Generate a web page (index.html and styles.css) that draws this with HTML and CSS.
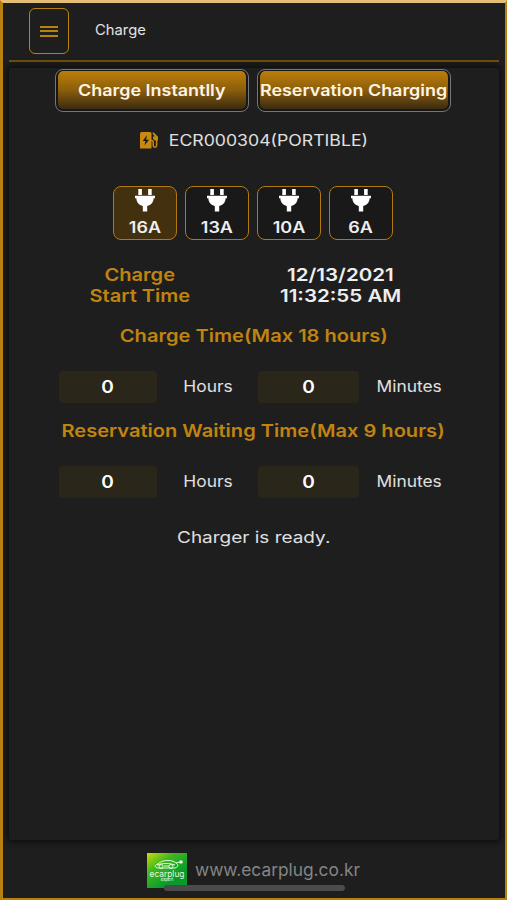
FILE: index.html
```html
<!DOCTYPE html>
<html lang="en">
<head>
<meta charset="utf-8">
<title>Charge</title>
<link rel="stylesheet" href="styles.css">
</head>
<body>
<svg width="0" height="0" class="defs">
  <symbol id="plug" viewBox="0 0 20 23">
    <path d="M3.300 0h3.600v6H3.300zM13.100 0h3.600v6h-3.600zM0 6.800h20v2.500h-1.400c0 4-2.600 6.800-6.400 7.600V22.500H7.800v-5.600C4 16.100 1.400 13.300 1.400 9.300H0z"/>
  </symbol>
</svg>
<div class="app">
  <header class="header">
    <button class="menu" aria-label="Menu"><i></i><i></i><i></i></button>
    <h1 class="title"><span>Charge</span></h1>
  </header>
  <main class="panel">
    <div class="modes">
      <button class="mode"><span class="t">Charge Instantlly</span></button>
      <button class="mode"><span class="t">Reservation Charging</span></button>
    </div>
    <div class="device">
      <svg class="station" viewBox="0 0 18 17">
        <path fill="#c9890f" d="M1.500 0h8.500q1.500 0 1.500 1.500V16.500H0V1.500Q0 0 1.500 0z"/>
        <path fill="#1e1e1e" d="M6.800 3.300 2.700 9h2.700l-.8 4.400L9 7.700H6.200z"/>
        <path fill="none" stroke="#c9890f" stroke-width="1.500" d="M11 8.500h1q1.200 0 1.200 1.400v3.600q0 1.700 1.700 1.700t1.700-1.700V6"/>
        <path fill="#c9890f" d="M12.300 1.200 13.500.2 18 4.800V8.500h-3.200L13 6.800V4.500h1.700z"/>
      </svg>
      <span class="t">ECR000304(PORTIBLE)</span>
    </div>
    <div class="amps">
      <button class="amp active"><svg><use href="#plug"/></svg><span class="t">16A</span></button>
      <button class="amp"><svg><use href="#plug"/></svg><span class="t">13A</span></button>
      <button class="amp"><svg><use href="#plug"/></svg><span class="t">10A</span></button>
      <button class="amp"><svg><use href="#plug"/></svg><span class="t">6A</span></button>
    </div>
    <div class="start">
      <div class="label"><span class="t">Charge</span><span class="t">Start Time</span></div>
      <div class="value"><span class="t">12/13/2021</span><span class="t">11:32:55 AM</span></div>
    </div>
    <h2 class="heading"><span class="t">Charge Time(Max 18 hours)</span></h2>
    <div class="duration">
      <div class="field"><span class="t">0</span></div><span class="unit"><span class="t">Hours</span></span>
      <div class="field"><span class="t">0</span></div><span class="unit"><span class="t">Minutes</span></span>
    </div>
    <h2 class="heading second"><span class="t">Reservation Waiting Time(Max 9 hours)</span></h2>
    <div class="duration">
      <div class="field"><span class="t">0</span></div><span class="unit"><span class="t">Hours</span></span>
      <div class="field"><span class="t">0</span></div><span class="unit"><span class="t">Minutes</span></span>
    </div>
    <p class="status"><span class="t">Charger is ready.</span></p>
  </main>
  <footer class="footer">
    <svg class="logo" viewBox="0 0 40 35">
      <defs><linearGradient id="g" x1="0" y1="0" x2=".65" y2=".75"><stop offset="0" stop-color="#c9dc0c"/><stop offset=".45" stop-color="#43b81e"/><stop offset="1" stop-color="#079b2c"/></linearGradient></defs>
      <path fill="url(#g)" d="M0 0h40v35H0z"/>
      <g fill="none" stroke="#e4f6df" stroke-width="1">
        <path d="M12 15c-5 0-5-3-1-4 3-4 14-5 18-1 3 2 2 4-1 5H12zM10 12c5-2 13-2 18 0"/>
        <circle cx="14" cy="13.500" r="2"/><circle cx="24" cy="13.500" r="2"/><path d="M17 13h5M29 10l4-1"/>
      </g>
      <circle cx="34" cy="9" r="1.800" fill="#e4f6df"/>
      <text class="brand" x="20" y="23.500" text-anchor="middle" textLength="35" lengthAdjust="spacingAndGlyphs">ecarplug</text>
      <text class="sub" x="20" y="28" text-anchor="middle">expert</text>
    </svg>
    <span class="url"><span>www.ecarplug.co.kr</span></span>
    <div class="home"></div>
  </footer>
</div>
</body>
</html>
```

FILE: styles.css
```css
* { box-sizing: border-box; }
body { margin: 0; background: #1e1e1e; font-family: Inter, "Liberation Sans", sans-serif; color: #eee; }
button { font: inherit; color: inherit; padding: 0; margin: 0; background: none; }
.defs { display: block; }
.app {
  width: 507px; height: 900px; display: flex; flex-direction: column; overflow: hidden;
  border: solid #b8800f; border-width: 3px 2px 2px 3px; border-top-color: #e4bd77;
  background: #1e1e1e;
}
.header {
  height: 59px; margin: 0 6px; flex: none; display: flex; align-items: flex-start;
  border-bottom: 2px solid #70500f;
}
.menu {
  width: 40px; height: 46px; margin: 5px 0 0 20px; border: 1px solid #b9810f; border-radius: 6px;
  display: flex; flex-direction: column; align-items: center; justify-content: center; gap: 2.500px;
}
.menu i { width: 18px; height: 2px; background: #b9810f; }
.title { margin: 17px 0 0 26px; font-size: 14.500px; line-height: 20px; font-weight: 400; color: #e2e2e2; }
.title span { display: inline-block; transform: scaleX(1.020); transform-origin: left; }
.panel {
  height: 772px; margin: 6px 6px 0; flex: none; border-radius: 3px;
  box-shadow: 0 0 6px 2px #0d0d0d; display: flex; flex-direction: column; align-items: center;
}
.t { display: block; white-space: nowrap; transform: scaleX(1.120); }
.modes { display: flex; gap: 8px; margin: 1px 0 0 -2px; }
.mode {
  width: 194px; height: 43px; padding: 1px 2px 2px; border: 1px solid #777; border-radius: 8px;
  display: flex; align-items: center; justify-content: center; font-size: 16px; font-weight: 600; color: #fff4e0;
  background: linear-gradient(#bd7e08, #8a5e0c 50%, #3c2b10) content-box, #171717;
}
.device { display: flex; align-items: center; height: 20px; margin: 18px 0 0; width: 228px; gap: 23px; font-size: 15.500px; color: #e0e0e0; }
.device .t { transform: scaleX(1.140); }
.station { width: 18px; height: 17px; }
.amps { display: flex; gap: 8px; margin: 36px 0 0 -2px; }
.amp {
  width: 64px; height: 54px; border: 1px solid #b07a10; border-radius: 8px; background: #191919;
  display: flex; flex-direction: column; align-items: center; font-size: 15.500px; line-height: 20px; font-weight: 600;
}
.amp svg { width: 20px; height: 23px; margin: 2px 0 6px; fill: #fff; flex: none; }
.amp.active { background: #42300f; }
.amp .t { transform: scaleX(1.160); }
.start { display: flex; width: 402px; margin: 24px 0 0 -2px; font-size: 17.500px; line-height: 21px; font-weight: 600; text-align: center; }
.label, .value { width: 201px; display: flex; flex-direction: column; align-items: center; }
.label { color: #c08410; padding-right: 26px; }
.value { padding-right: 26px; }
.start .label .t, .heading .t { transform: scaleX(1.147); }
.start .value .t { transform: scaleX(1.175); }
.heading { margin: 19px 0 0 -1px; font-size: 17.500px; line-height: 21px; font-weight: 600; color: #c08410; }
.second { margin-top: 17px; }
.duration { display: grid; grid-template-columns: 98px 101px 101px 101px; height: 32px; width: 401px; margin: 25px 0 0 11px; align-items: center; }
.field { height: 32px; border-radius: 4px; background: #2a2619; display: flex; align-items: center; justify-content: center; font-size: 17px; font-weight: 600; color: #fff; }
.unit { display: flex; justify-content: center; font-size: 15.500px; color: #e0e0e0; padding-bottom: 2px; }
.status { margin: 29px 0 0; font-size: 16px; line-height: 21px; color: #e0e0e0; }
.status .t { transform: scaleX(1.185); }
.footer { position: relative; flex: 1; display: flex; align-items: flex-start; padding: 13px 0 0 144px; }
.logo { width: 40px; height: 35px; flex: none; }
.brand { font: 8.500px Inter, sans-serif; fill: #e4f6df; }
.sub { font: 600 4px Inter, sans-serif; fill: #d5efcf; }
.url { margin: 5px 0 0 8px; font-size: 17.500px; line-height: 24px; color: #858585; }
.url span { display: inline-block; transform: scaleX(.99); transform-origin: left; }
.home { position: absolute; left: 161px; top: 45px; width: 181px; height: 6px; border-radius: 3px; background: #4b4b4b; }
```
